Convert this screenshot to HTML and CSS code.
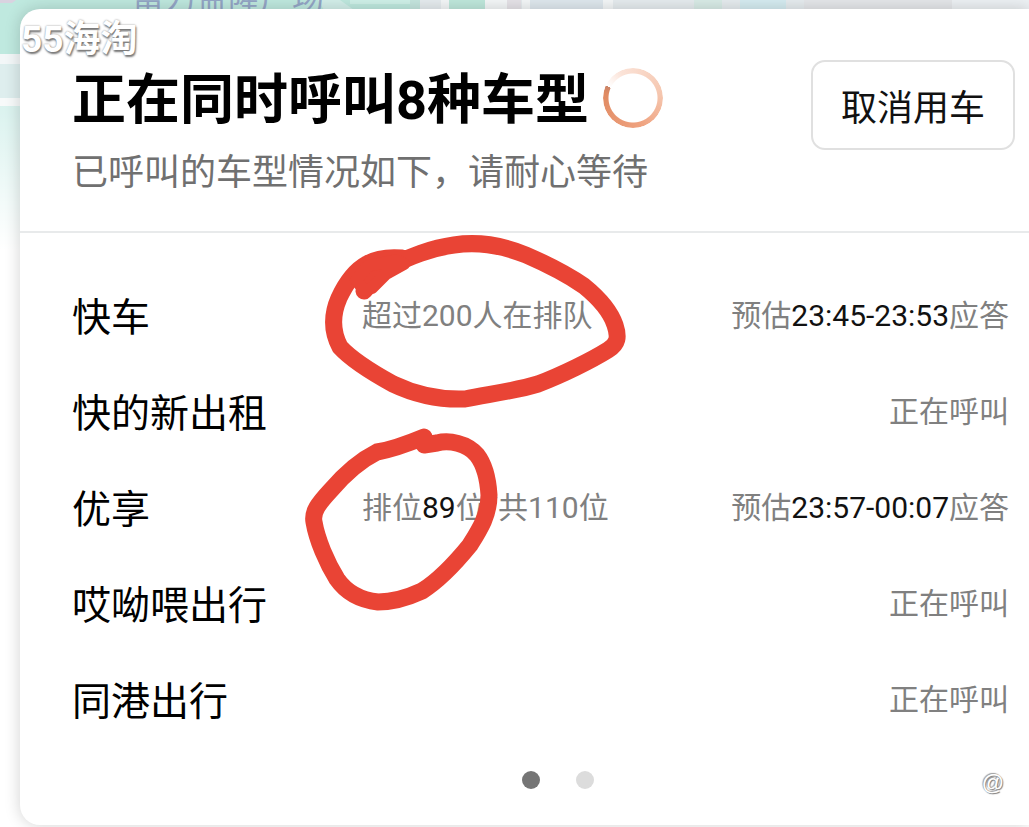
FILE: index.html
```html
<!DOCTYPE html>
<html lang="zh-CN">
  <head>
    <meta charset="utf-8">
    <meta name="viewport" content="width=device-width, initial-scale=1">
    <title>正在呼叫</title>
    <link rel="stylesheet" href="styles.css">
  </head>
  <body>
    <!-- map behind the card -->
    <svg class="map" width="1029" height="300" aria-hidden="true">
      <defs>
        <linearGradient id="fade" x1="0" y1="0" x2="0" y2="1">
          <stop offset="0" stop-color="#fff" stop-opacity="0"/>
          <stop offset="1" stop-color="#fff"/>
        </linearGradient>
      </defs>
      <rect width="1029" height="300" fill="#e6ecef"/>
      <rect width="420" height="54" fill="#bfe9df"/>
      <path d="M318 0h22l14 10h-30z" fill="#d3efea"/>
      <rect x="350" width="60" height="4" fill="#cff1e9"/>
      <rect y="54" width="30" height="10" fill="#f3f7f8"/>
      <rect y="64" width="30" height="34" fill="#deeeee"/>
      <rect y="98" width="30" height="8" fill="#f7fafa"/>
      <rect y="106" width="30" height="194" fill="#d9f2ee"/>
      <path d="M0 0h16l-4 3H0z" fill="#d9d3e0"/>
      <rect x="410" width="10" height="10" fill="#c5e6df"/>
      <rect x="449" width="36" height="10" fill="#bfe8dc"/>
      <path d="M441 0h8v10h-8zM485 0h22v10h-22zM522 0h8v10h-8zM603 0h10v10h-10z" fill="#f4f7f8"/>
      <rect x="507" width="14" height="10" fill="#e6e3e8"/>
      <rect x="530" width="73" height="10" fill="#dfe8ee"/>
      <rect x="694" width="28" height="10" fill="#d9ece7"/>
      <rect x="740" width="46" height="10" fill="#d5ecf1"/>
      <rect x="804" width="148" height="10" fill="#e5e7ea"/>
      <rect x="952" width="77" height="10" fill="#edf1f4"/>
      <rect y="100" width="30" height="150" fill="url(#fade)"/>
      <rect y="249" width="1029" height="51" fill="#fff"/>
      <text class="place" x="132" y="9">富力益隆广场</text>
    </svg>

    <div class="card">
      <div class="head">
        <div>
          <div class="title">
            <h1>正在同时呼叫8种车型</h1>
            <span class="spinner"></span>
          </div>
          <p>已呼叫的车型情况如下，请耐心等待</p>
        </div>
        <button class="cancel" type="button">取消用车</button>
      </div>

      <div class="list">
        <table>
          <tr><th>快车</th><td>超过200人在排队</td><td class="state">预估<b>23:45-23:53</b>应答</td></tr>
          <tr><th>快的新出租</th><td></td><td class="state">正在呼叫</td></tr>
          <tr><th>优享</th><td>排位<b>89</b>位/共110位</td><td class="state">预估<b>23:57-00:07</b>应答</td></tr>
          <tr><th>哎呦喂出行</th><td></td><td class="state">正在呼叫</td></tr>
          <tr><th>同港出行</th><td></td><td class="state">正在呼叫</td></tr>
        </table>

        <!-- red pen marks -->
        <svg class="marks" viewBox="290 220 350 400" width="350" height="400" aria-hidden="true">
          <path d="M364 291C374 279 382 270 392 266C408 257 432 248 454 245C480 241 504 246 526 255C549 265 568 275 584 286C600 299 611 313 615 325C619 337 618 344 608 350C592 360 562 375 538 384C515 391 490 394 465 399C439 400 414 394 393 384C373 373 350 358 340 347C331 330 332 314 339 298C346 283 356 270 367 264C377 258 390 257 402 258"/>
          <path class="blot" d="M364 290L356 280L368 266L396 260L404 264L386 274L372 288Z"/>
          <path d="M424 437C412 442 395 449 377 452C359 461 343 476 331 490C318 504 312 512 314 522C317 540 327 563 337 579C346 592 360 600 378 602C393 602 409 597 422 591C441 579 457 561 470 545C480 529 489 515 489 495C488 479 484 464 477 455C467 443 449 440 437 443L424 445"/>
        </svg>
      </div>

      <div class="dots"><i class="on"></i><i></i></div>
      <span class="credit">@</span>
      <span class="logo">55海淘</span>
    </div>
  </body>
</html>
```

FILE: styles.css
```css
body {
  margin: 0;
  padding: 9px 0 2px 20px;
  overflow-x: hidden;
  background: #fff;
  font-family: Roboto, "Noto Sans CJK SC", sans-serif;
  color: #000;
}
.map {
  position: absolute;
  top: 0;
  left: 0;
}
.place {
  font-size: 32px;
  fill: #94a6c6;
}
.card {
  position: relative;
  background: #fff;
  border-radius: 20px 0 0 20px;
  box-shadow: 0 0 16px rgba(0, 0, 0, 0.18);
}
.head {
  display: flex;
  justify-content: space-between;
  align-items: flex-start;
  padding: 51px 14px 31px 52px;
  border-bottom: 2px solid #e8eaeb;
}
.title {
  display: flex;
  align-items: center;
  height: 76px;
}
h1 {
  margin: 0;
  padding-top: 6px;
  font-size: 54px;
  line-height: 76px;
  font-weight: bold;
}
.spinner {
  width: 60px;
  height: 60px;
  margin-left: 14px;
  border-radius: 50%;
  background: conic-gradient(from -65deg, #fff 0deg, #fbe3d8 40deg, #f5c5ad 150deg, #efa27f 230deg, #e08a62 345deg, #c98468 360deg);
  -webkit-mask: radial-gradient(circle, transparent 24px, #000 25px);
  mask: radial-gradient(circle, transparent 24px, #000 25px);
}
.cancel {
  width: 204px;
  height: 90px;
  border: 2px solid #e0e0e0;
  border-radius: 14px;
  background: #fff;
  font: inherit;
  font-size: 36px;
  color: #111;
}
.head p {
  margin: 0;
  padding-top: 10px;
  font-size: 36px;
  line-height: 54px;
  color: #707070;
}
.list {
  position: relative;
  padding: 34px 20px 0 52px;
}
table {
  width: 100%;
  border-collapse: collapse;
}
tr {
  height: 96px;
}
th, td {
  padding: 0 0 2px;
  text-align: left;
  font-weight: normal;
  white-space: nowrap;
}
th {
  width: 290px;
  font-size: 39px;
}
td {
  padding-bottom: 4px;
  font-size: 30px;
  color: #808080;
}
td b {
  font-weight: normal;
  color: #111;
}
.state {
  text-align: right;
}
.marks {
  position: absolute;
  top: -13px;
  left: 270px;
  fill: none;
  stroke: #e94435;
  stroke-width: 17px;
  stroke-linecap: round;
  stroke-linejoin: round;
}
.blot {
  fill: #e94435;
  stroke-width: 12px;
}
.dots {
  display: flex;
  justify-content: center;
  gap: 36px;
  padding: 24px 0 36px 66px;
}
.dots i {
  width: 18px;
  height: 18px;
  border-radius: 50%;
  background: #dcdcdc;
}
.dots .on {
  background: #757575;
}
/* watermarks */
.logo, .credit {
  position: absolute;
  color: #fff;
  line-height: 36px;
}
.logo {
  top: 13px;
  left: 1px;
  font-size: 37px;
  font-weight: bold;
  text-shadow: 1px 2px 2px #777, 0 0 2px #888;
}
.credit {
  right: 25px;
  bottom: 24px;
  font-family: "Liberation Sans", sans-serif;
  font-size: 22px;
  text-shadow: 1px 1px 1px #777, -1px -1px 1px #999;
}
```
